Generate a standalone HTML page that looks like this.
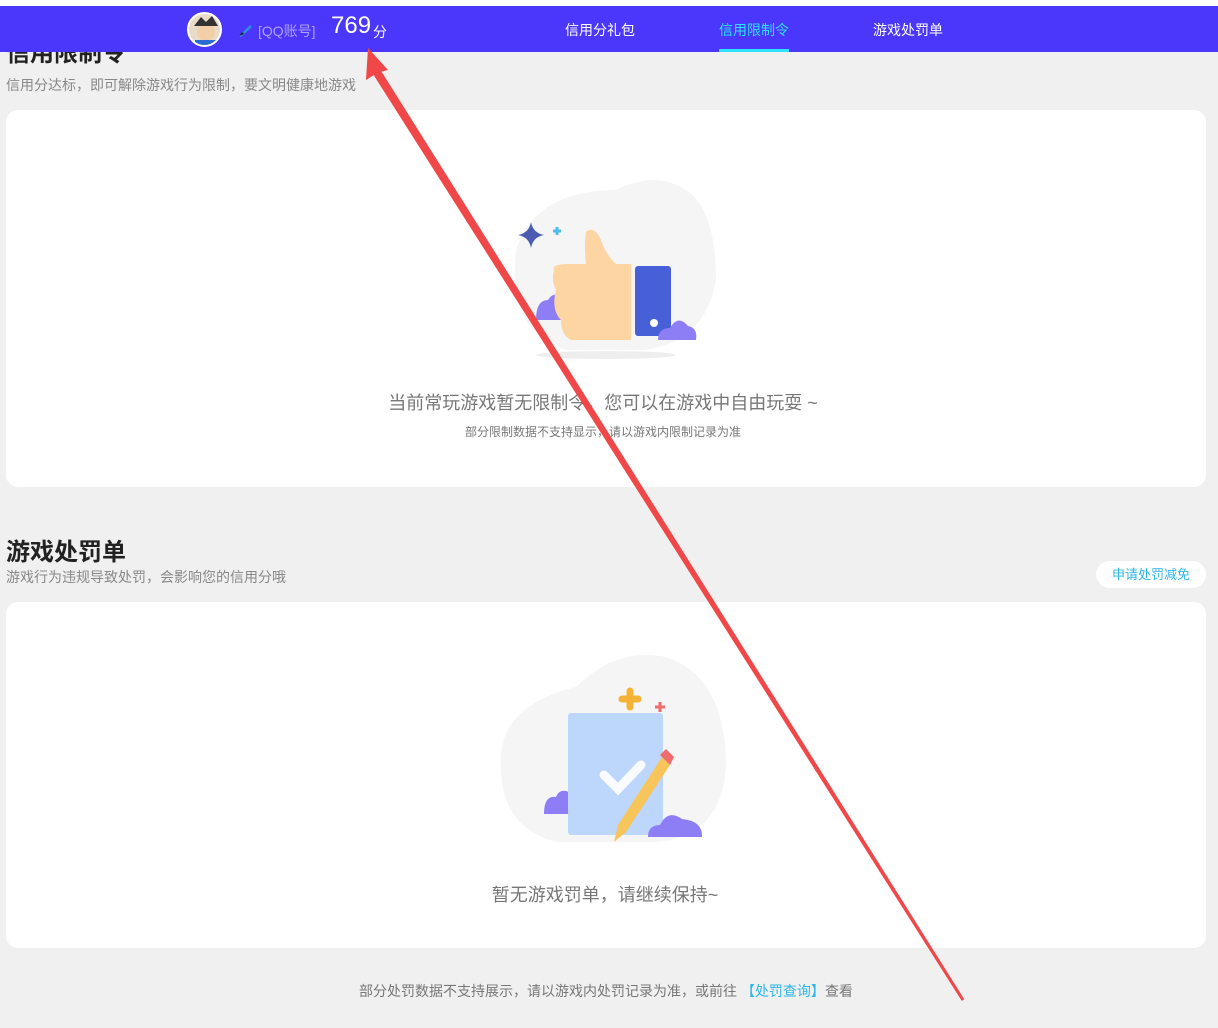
<!DOCTYPE html>
<html><head><meta charset="utf-8"><style>
*{margin:0;padding:0;box-sizing:border-box}
body{width:1218px;height:1028px;background:#f0f0f0;font-family:"Liberation Sans","Noto Sans CJK SC",sans-serif;position:relative;overflow:hidden}
.top{position:absolute;left:0;top:0;width:1218px;height:6px;background:#fff}
.hdr{position:absolute;left:0;top:6px;width:1218px;height:46px;background:#4b36fc;color:#fff}
.av{position:absolute;left:187px;top:6px;width:35px;height:35px;border-radius:50%;background:#e8dcc8;border:2px solid #fff;overflow:hidden}
.nav{position:absolute;top:14px;font-size:14px}
.card{position:absolute;left:6px;width:1200px;background:#fff;border-radius:12px}
h2{position:absolute;left:6px;font-size:24px;font-weight:bold;color:#222}
.sub{position:absolute;left:6px;font-size:14px;color:#888}
.c{position:absolute;left:0;width:1218px;text-align:center}
</style></head><body>
<div class="top"></div>
<h2 style="top:33px">信用限制令</h2>
<div class="sub" style="top:75px">信用分达标，即可解除游戏行为限制，要文明健康地游戏</div>
<div class="hdr">
 <div class="av"><svg width="35" height="35"><circle cx="17" cy="18" r="9" fill="#f3cfa8"/><path d="M5 12 L12 3 L17 8 L23 2 L29 12 Z" fill="#333"/><rect x="6" y="26" width="24" height="12" fill="#2b6cd4"/></svg></div>
 <svg style="position:absolute;left:237px;top:16px" width="16" height="16"><path d="M2 14 L13 3 L15 5 L4 15 Z" fill="#2c8de0"/><path d="M2 14 L5 10 L7 12 Z" fill="#222"/></svg>
 <span style="position:absolute;left:258px;top:15px;font-size:14px;color:#a9a2ff">[QQ账号]</span>
 <span style="position:absolute;left:331px;top:6px;font-size:24px">769</span>
 <span style="position:absolute;left:373px;top:16px;font-size:14px">分</span>
 <span class="nav" style="left:565px">信用分礼包</span>
 <span class="nav" style="left:719px;color:#2ee3ff">信用限制令</span>
 <div style="position:absolute;left:719px;top:43px;width:70px;height:3px;background:#2ee3ff"></div>
 <span class="nav" style="left:873px">游戏处罚单</span>
</div>
<div class="card" style="top:110px;height:377px">
 <svg style="position:absolute;left:500px;top:60px" width="220" height="200">
  <path d="M10 80 Q30 20 110 20 Q150 0 180 20 Q210 40 210 110 Q200 170 140 180 L60 180 Q0 160 10 80Z" fill="#f5f5f6"/>
  <path d="M25 52 Q27 63 38 65 Q27 67 25 78 Q23 67 12 65 Q23 63 25 52Z" fill="#4a5bb0"/>
  <path d="M47 61 h8 M51 57 v8" stroke="#4fbdf0" stroke-width="3"/>
  <path d="M30 150 Q30 130 42 130 Q48 120 58 128 L58 150Z" fill="#8d7ef5"/>
  <path d="M48 100 Q45 95 60 94 L80 94 Q78 75 80 62 Q88 55 95 70 Q100 85 110 94 L125 94 L125 170 L65 170 Q55 165 55 150 Q45 140 50 120 Q45 110 48 100Z" fill="#fcd5a3"/>
  <rect x="129" y="96" width="36" height="70" rx="3" fill="#4760d8"/>
  <circle cx="148" cy="153" r="4" fill="#fff"/>
  <path d="M152 170 Q152 158 164 158 Q172 144 182 156 Q192 158 190 170Z" fill="#8d7ef5"/>
  <ellipse cx="100" cy="185" rx="70" ry="4" fill="#eee"/>
 </svg>
 <div class="c" style="left:-12px;top:279px;font-size:18px;color:#777">当前常玩游戏暂无限制令，您可以在游戏中自由玩耍 ~</div>
 <div class="c" style="left:-12px;top:313px;font-size:12px;color:#777">部分限制数据不支持显示，请以游戏内限制记录为准</div>
</div>
<h2 style="top:532px">游戏处罚单</h2>
<div class="sub" style="top:567px">游戏行为违规导致处罚，会影响您的信用分哦</div>
<div style="position:absolute;left:1096px;top:561px;width:110px;height:27px;background:#fff;border-radius:14px;color:#2bb6ea;font-size:13px;text-align:center;line-height:27px">申请处罚减免</div>
<div class="card" style="top:602px;height:346px">
 <svg style="position:absolute;left:490px;top:45px" width="240" height="210">
  <path d="M5 120 Q0 60 80 40 Q120 0 170 10 Q230 30 230 120 Q225 190 160 195 L60 195 Q5 180 5 120Z" fill="#f5f5f6"/>
  <path d="M134 44 v16 M126 52 h16" stroke="#f5b335" stroke-width="7" stroke-linecap="round"/>
  <path d="M164 55 v10 M159 60 h10" stroke="#f06b6b" stroke-width="3"/>
  <path d="M48 167 Q48 148 60 150 Q64 140 75 146 L75 167Z" fill="#8d7ef5"/>
  <rect x="72" y="66" width="95" height="122" rx="3" fill="#bcd7fb"/>
  <path d="M108 128 L122 142 L145 118" stroke="#fff" stroke-width="9" fill="none" stroke-linecap="round" opacity=".9"/>
  <path d="M166 110 L174 118 L130 185 L118 195 L122 178Z" fill="#f8c55a"/>
  <path d="M164 108 L170 102 L178 110 L174 118Z" fill="#f06b6b"/>
  <path d="M152 190 Q152 178 164 178 Q172 162 186 172 Q207 174 206 190Z" fill="#8d7ef5"/>
 </svg>
 <div class="c" style="left:-10px;top:279px;font-size:18px;color:#777">暂无游戏罚单，请继续保持~</div>
</div>
<div class="c" style="top:981px;left:-3px;font-size:14px;color:#777">部分处罚数据不支持展示，请以游戏内处罚记录为准，或前往 <span style="color:#2bb6ea">【处罚查询】</span>查看</div>
<svg style="position:absolute;left:0;top:0" width="1218" height="1028">
 <path d="M368 48 L388 70 L380 72 L963 1000 L962 1001 L374 75 L366 80Z" fill="#f04848"/>
 <path d="M380 72 L963 1000 L376 76Z" fill="#f04848" stroke="#f04848" stroke-width="3"/>
</svg>
</body></html>
